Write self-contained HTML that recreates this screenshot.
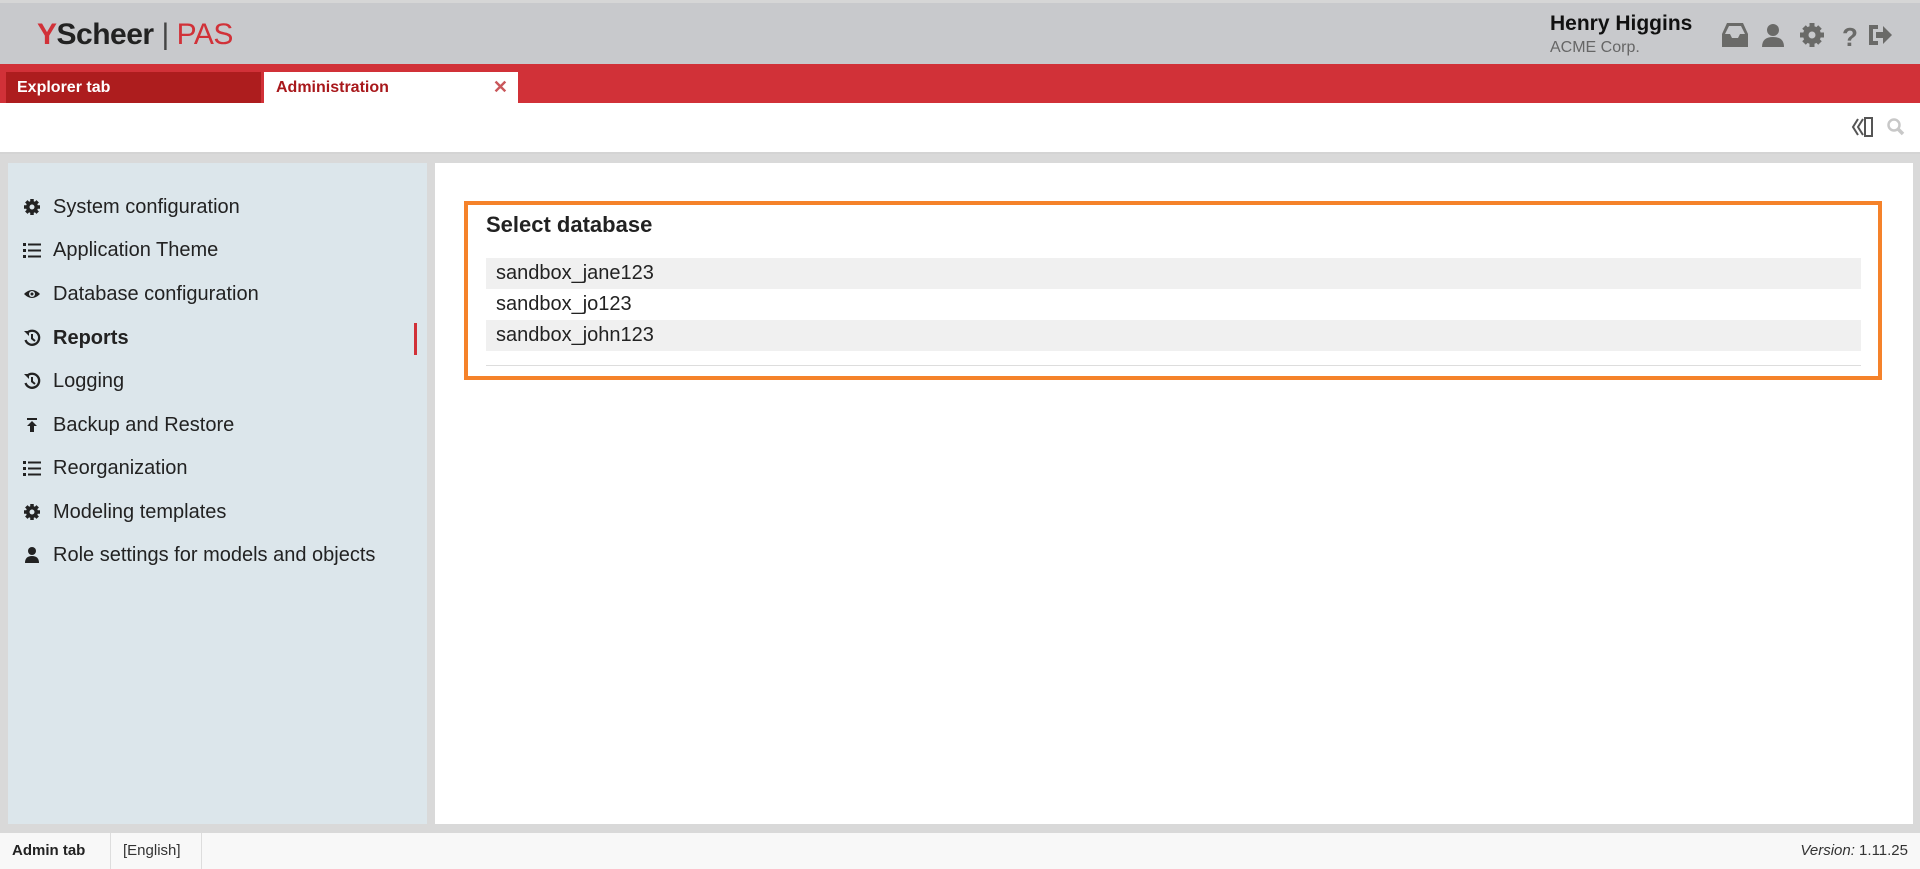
<!DOCTYPE html>
<html><head><meta charset="utf-8"><style>
*{box-sizing:border-box;margin:0;padding:0}
body{width:1920px;height:869px;overflow:hidden;font-family:"Liberation Sans",sans-serif;background:#d9d9d9;position:relative;color:#222}
.abs{position:absolute}
#hdr{left:0;top:0;width:1920px;height:64px;background:#c8c9cc;border-top:3px solid #d6d6d6}
#red{left:0;top:64px;width:1920px;height:39px;background:#d13138}
#tb{left:0;top:103px;width:1920px;height:51px;background:#fff;border-bottom:2px solid #d4d4d4}
#side{left:8px;top:163px;width:419px;height:661px;background:#dce6eb}
#main{left:435px;top:163px;width:1478px;height:661px;background:#fff}
#foot{left:0;top:833px;width:1920px;height:36px;background:#f8f8f8;font-size:15px}
.item{position:absolute;left:45px;font-size:20px;color:#222;line-height:24px;white-space:nowrap}
.ic{position:absolute;left:-30px;top:3px;width:18px;height:18px}
.row{position:absolute;left:486px;width:1375px;height:31px;font-size:20px;line-height:31px;padding-left:10px;color:#222}
</style></head><body>
<div id="hdr" class="abs">
 <div class="abs" style="left:37px;top:15px;font-size:30px;line-height:34px;color:#222;letter-spacing:-0.5px;white-space:nowrap">
  <span style="color:#d13138;font-weight:bold">Y</span><span style="font-weight:bold">Scheer</span> <span style="color:#444;font-weight:300">|</span><span style="color:#d13138;font-weight:300"> PAS</span>
 </div>
 <div class="abs" style="left:1550px;top:9px;font-size:21px;font-weight:bold;color:#111">Henry Higgins</div>
 <div class="abs" style="left:1550px;top:36px;font-size:16px;color:#666">ACME Corp.</div>
 <svg class="abs" style="left:1720px;top:17px" width="190" height="30" viewBox="0 0 190 30">
  <g fill="#6a6a68">
   <path d="M2 14 L7 3 H23 L28 14 V27 H2 Z M5 14 H10 L12 18 H18 L20 14 H25 L21 6 H9 Z" fill-rule="evenodd"/>
   <circle cx="53" cy="10" r="6"/><path d="M42 27 Q42 17 53 17 Q64 17 64 27 Z"/>
   <g stroke="#6a6a68" stroke-width="5"><path d="M92 3V27M80 15H104M84 7L100 23M100 7L84 23"/></g>
   <circle cx="92" cy="15" r="9"/>
   <circle cx="92" cy="15" r="3.5" fill="#c8c9cc"/>
   <text x="122" y="26" font-family="Liberation Sans" font-weight="bold" font-size="26" fill="#6a6a68">?</text>
   <path d="M149 5 H158 V9 H153 V21 H158 V25 H149 Z"/><path d="M156 12 H163 V6 L172 15 L163 24 V18 H156 Z"/>
  </g>
 </svg>
</div>
<div id="red" class="abs">
 <div class="abs" style="left:6px;top:8px;width:255px;height:31px;background:#ad1d1e;color:#fff;font-weight:bold;font-size:16px;line-height:31px;padding-left:11px">Explorer tab</div>
 <div class="abs" style="left:264px;top:8px;width:254px;height:31px;background:#fff;color:#a8181b;font-weight:bold;font-size:16px;line-height:31px;padding-left:12px">Administration<span style="position:absolute;right:10px;color:#c9575b;font-size:18px">✕</span></div>
</div>
<div id="tb" class="abs">
 <svg class="abs" style="left:1850px;top:12px" width="60" height="26" viewBox="0 0 60 26">
  <path d="M8 4 L3 12 L8 20 M13 4 L8 12 L13 20 M15 3 H22 V21 H15 Z" fill="none" stroke="#555" stroke-width="2"/>
  <circle cx="44" cy="10" r="5.5" fill="none" stroke="#c8c8c8" stroke-width="2.5"/><path d="M48 14 L53 19" stroke="#c8c8c8" stroke-width="3.5"/>
 </svg>
</div>
<div id="side" class="abs">
 <div class="item" style="top:32px"><svg class="ic" viewBox="0 0 18 18"><g stroke="#222" stroke-width="3.5"><path d="M9 1V17M1 9H17M3.3 3.3L14.7 14.7M14.7 3.3L3.3 14.7"/></g><circle cx="9" cy="9" r="6" fill="#222"/><circle cx="9" cy="9" r="2.5" fill="#dce6eb"/></svg>System configuration</div>
 <div class="item" style="top:75px"><svg class="ic" viewBox="0 0 18 18" fill="#222"><rect x="0" y="2" width="3" height="3"/><rect x="0" y="8" width="3" height="3"/><rect x="0" y="14" width="3" height="3"/><rect x="5" y="2.5" width="13" height="2"/><rect x="5" y="8.5" width="13" height="2"/><rect x="5" y="14.5" width="13" height="2"/></svg>Application Theme</div>
 <div class="item" style="top:119px"><svg class="ic" viewBox="0 0 18 18"><path d="M1 9 Q9 1 17 9 Q9 17 1 9Z" fill="#222"/><circle cx="9" cy="9" r="3" fill="#dce6eb"/><circle cx="9" cy="9" r="1.5" fill="#222"/></svg>Database configuration</div>
 <div class="item" style="top:163px;font-weight:bold"><svg class="ic" viewBox="0 0 18 18"><path d="M4 4 A7 7 0 1 1 2.5 11" fill="none" stroke="#222" stroke-width="2.3"/><path d="M1 2 L6 2 L6 7Z" fill="#222"/><path d="M9 5 V9.5 L12 12" fill="none" stroke="#222" stroke-width="2"/></svg>Reports</div>
 <div class="item" style="top:206px"><svg class="ic" viewBox="0 0 18 18"><path d="M4 4 A7 7 0 1 1 2.5 11" fill="none" stroke="#222" stroke-width="2.3"/><path d="M1 2 L6 2 L6 7Z" fill="#222"/><path d="M9 5 V9.5 L12 12" fill="none" stroke="#222" stroke-width="2"/></svg>Logging</div>
 <div class="item" style="top:250px"><svg class="ic" viewBox="0 0 18 18" fill="#222"><rect x="4" y="2" width="10" height="2"/><path d="M9 5 L14 10 H11 V16 H7 V10 H4Z"/></svg>Backup and Restore</div>
 <div class="item" style="top:293px"><svg class="ic" viewBox="0 0 18 18" fill="#222"><rect x="0" y="2" width="3" height="3"/><rect x="0" y="8" width="3" height="3"/><rect x="0" y="14" width="3" height="3"/><rect x="5" y="2.5" width="13" height="2"/><rect x="5" y="8.5" width="13" height="2"/><rect x="5" y="14.5" width="13" height="2"/></svg>Reorganization</div>
 <div class="item" style="top:337px"><svg class="ic" viewBox="0 0 18 18"><g stroke="#222" stroke-width="3.5"><path d="M9 1V17M1 9H17M3.3 3.3L14.7 14.7M14.7 3.3L3.3 14.7"/></g><circle cx="9" cy="9" r="6" fill="#222"/><circle cx="9" cy="9" r="2.5" fill="#dce6eb"/></svg>Modeling templates</div>
 <div class="item" style="top:380px"><svg class="ic" viewBox="0 0 18 18" fill="#222"><circle cx="9" cy="5" r="4"/><path d="M2 17 Q2 10 9 10 Q16 10 16 17Z"/></svg>Role settings for models and objects</div>
 <div class="abs" style="left:406px;top:160px;width:3px;height:32px;background:#d13138"></div>
</div>
<div id="main" class="abs"></div>
<div class="abs" style="left:464px;top:201px;width:1418px;height:179px;border:4px solid #f5822a;background:#fff"></div>
<div class="abs" style="left:486px;top:212px;font-size:22px;font-weight:bold;color:#222">Select database</div>
<div class="row" style="top:258px;background:#f0f0f0">sandbox_jane123</div>
<div class="row" style="top:289px">sandbox_jo123</div>
<div class="row" style="top:320px;background:#f0f0f0">sandbox_john123</div>
<div class="abs" style="left:486px;top:365px;width:1375px;height:1px;background:#ddd"></div>
<div id="foot" class="abs">
 <div class="abs" style="left:0;top:0;width:111px;height:36px;line-height:36px;padding-left:12px;font-weight:bold;color:#222;border-right:1px solid #ddd">Admin tab</div>
 <div class="abs" style="left:111px;top:0;width:91px;height:36px;line-height:36px;padding-left:12px;color:#333;border-right:1px solid #ddd">[English]</div>
 <div class="abs" style="right:12px;top:0;line-height:36px;color:#333"><i>Version:</i> 1.11.25</div>
</div>
</body></html>
